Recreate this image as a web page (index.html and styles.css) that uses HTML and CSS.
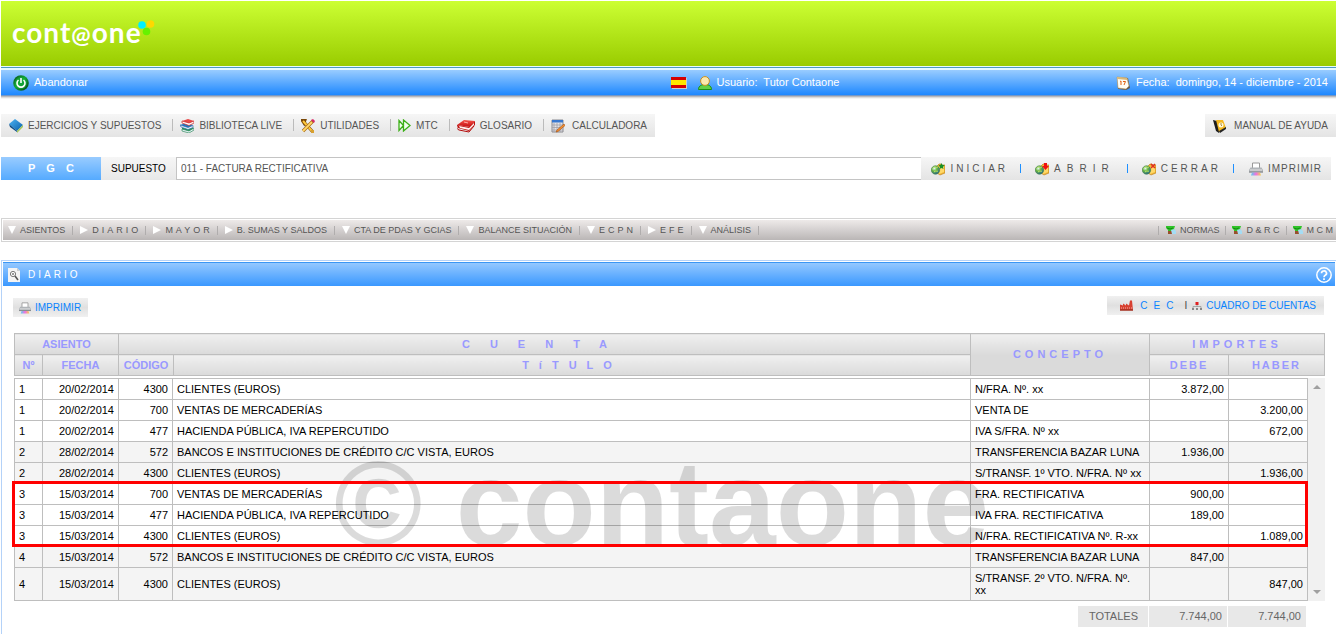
FILE: index.html
```html
<!DOCTYPE html>
<html lang="es">
<head>
<meta charset="utf-8">
<title>Contaone - Diario</title>
<link rel="stylesheet" href="styles.css">
</head>
<body>
<svg class="defs" aria-hidden="true">
  <defs>
    <linearGradient id="gBlue" x1="0" y1="0" x2="1" y2="1"><stop offset="0" stop-color="#4db4f4"/><stop offset="1" stop-color="#0a5fa8"/></linearGradient>
    <linearGradient id="gRed" x1="0" y1="0" x2="0" y2="1"><stop offset="0" stop-color="#f5544c"/><stop offset="1" stop-color="#c40d0d"/></linearGradient>
    <linearGradient id="gPower" x1="0" y1="0" x2="1" y2="1"><stop offset="0" stop-color="#0a4a1a"/><stop offset=".45" stop-color="#12a838"/><stop offset="1" stop-color="#05380f"/></linearGradient>
    <linearGradient id="gInk"><stop offset="0" stop-color="#58d0f0"/><stop offset=".5" stop-color="#f070e0"/><stop offset="1" stop-color="#f8d048"/></linearGradient>
    <radialGradient id="gGlobe" cx=".35" cy=".3" r=".8"><stop offset="0" stop-color="#e8f8ff"/><stop offset=".4" stop-color="#6cb83c"/><stop offset="1" stop-color="#1c5aa0"/></radialGradient>
    <symbol id="printer" viewBox="0 0 14 14">
      <path d="M3.500 6V1h7v5" fill="#fff" stroke="#999"/>
      <path d="M1.500 5.500h11L14 8v2.500H0V8z" fill="#b0b4b8"/>
      <path d="M1 8h12" stroke="#e4e4e4"/>
      <path d="M0 10h14" stroke="#808488"/>
      <path d="M3 10.500h8l1 3H2z" fill="url(#gInk)"/>
    </symbol>
    <symbol id="globe" viewBox="0 0 14 14">
      <path d="M6 4l2-2h2l1 1h3v8l-5 2-3-2z" fill="#f0b838" stroke="#b87a18" stroke-width=".6"/>
      <path d="M8 5l5-1v6l-5 2z" fill="#ffd868"/>
      <circle cx="4.500" cy="8" r="4.200" fill="url(#gGlobe)" stroke="#3a7a3a" stroke-width=".6"/>
      <path d="M2 6c2-2 3 0 5-1M3 10c2-2 3 0 4-1" stroke="#bfe86a" fill="none"/>
    </symbol>
    <symbol id="puzzle" viewBox="0 0 10 10">
      <path d="M0 1h9l-1 3 1 4H2L2 5 0 3z" fill="#30c428"/>
      <path d="M1 3l3 1 3-1" stroke="#148a14" fill="none"/>
      <path d="M2 6h4v3H2z" fill="#98502c"/>
      <path d="M5 5l3-1 2 2v3H6z" fill="#a4dcf4"/>
    </symbol>
  </defs>
</svg>

<header class="brand">
  <h1 class="logo"><span>cont</span><span class="logo-at">@</span><span>one</span></h1>
  <svg class="logo-dots" viewBox="0 0 18 18" aria-hidden="true"><circle cx="5" cy="6" r="3.800" fill="#00f0ff"/><circle cx="13.500" cy="5" r="3.800" fill="#ffd800"/><circle cx="9.500" cy="12.500" r="3.800" fill="#66f200"/></svg>
</header>

<div class="status">
  <div class="status-left"><a href="#" class="status-item">
    <svg class="i16" viewBox="0 0 16 16"><circle cx="8" cy="8" r="7.800" fill="url(#gPower)"/><circle cx="8" cy="8" r="6" fill="#18b040" opacity=".6"/><path d="M5.500 5a4 4 0 1 0 5 0M8 3v5" stroke="#fff" stroke-width="1.600" fill="none"/></svg>
    <span>Abandonar</span></a></div>
  <div class="status-user">
    <svg class="flag" viewBox="0 0 16 12"><path d="M1 1h15v11H1z" fill="#ccc"/><path d="M0 0h15v11H0z" fill="#d40000"/><path d="M0 3h15v5H0z" fill="#ffe600"/></svg>
    <svg class="i14" viewBox="0 0 14 14"><path d="M.5 13.500C.5 9.500 4 8.500 7 8.500s6.500 1 6.500 5z" fill="#62d048" stroke="#1c9018"/><circle cx="7" cy="5" r="4.400" fill="#fbe9b0" stroke="#c89020"/></svg>
    <span>Usuario:&nbsp; Tutor Contaone</span></div>
  <div class="status-date">
    <svg class="i14" viewBox="0 0 14 14"><path d="M1 1l11 1 2 10-4 2-8-1z" fill="#6a5a48"/><path d="M1 1l10 1 2 8-3 3-8-1z" fill="#fffdf4" stroke="#b09868" stroke-width=".6"/><path d="M1 1l10 1 .4 2L1.200 3z" fill="#d8b878"/><path d="M4 5.500l1-.5v4M7 5.500h2.500L8 9" stroke="#e06010" fill="none"/></svg>
    <span>Fecha:&nbsp; domingo, 14 - diciembre - 2014</span></div>
</div>

<div class="tools">
  <nav class="strip" aria-label="Principal">
    <a href="#"><svg class="i14" viewBox="0 0 14 14"><path d="M0 5l6-5 8 6-6 6z" fill="url(#gBlue)"/><path d="M0 5l1 3 7 5v-1z" fill="#0a4880"/><path d="M8 12l6-6v2l-6 6z" fill="#a8c858"/></svg>EJERCICIOS Y SUPUESTOS</a>
    <a href="#"><svg class="i14" viewBox="0 0 14 14"><path d="M2 9l6-2 6 2-5 4-7-2z" fill="#2d9a58"/><path d="M2 10l7 2 5-3v2l-5 3-7-2z" fill="#e4f4f4" stroke="#18784a" stroke-width=".6"/><path d="M0 6l6-2 7 2-5 3z" fill="#2878c0"/><path d="M0 6l8 2.500 5-2v2l-5 2L1 8z" fill="#eaf4fc" stroke="#1c58a0" stroke-width=".6"/><path d="M2 2l6-2 6 2-5 3z" fill="#e84848"/><path d="M2 2l7 2 5-2v2L9 6.500 2 4z" fill="#fff" stroke="#c82020" stroke-width=".7"/></svg>BIBLIOTECA LIVE</a>
    <a href="#"><svg class="i14" viewBox="0 0 14 14"><path d="M2 2l9 10M1 1l3 0-1 3z" stroke="#7a4808" stroke-width="3"/><path d="M2 2l9 10" stroke="#ffc838" stroke-width="2"/><path d="M12 2L2 12" stroke="#a86818" stroke-width="3.200"/><path d="M11 3L2 12" stroke="#ffd868" stroke-width="1.800"/><path d="M10 1l3 3 1-2-2-2z" fill="#d82868"/><path d="M10 11l3 0v3h-3z" fill="#d8a030"/></svg>UTILIDADES</a>
    <a href="#"><svg class="i13" viewBox="0 0 13 13"><path d="M1 1.500v10l4.500-5zM5.500 1v11L12 6.500z" fill="#f4fff0" stroke="#3cb018" stroke-width="1.300"/></svg>MTC</a>
    <a href="#"><svg class="book" viewBox="0 0 18 14"><path d="M0 6l7-5 11 1-5 6z" fill="url(#gRed)"/><path d="M0 6l12 2 6-6v4l-6 6L1 9z" fill="#c01010"/><path d="M2 7l10 2 5-5v2l-5 5-9-2z" fill="#fff4f0"/><path d="M0 6c-1 3 0 4 2 5l10 2 5-6" stroke="#b40c0c" fill="none"/><path d="M7 3l4 1" stroke="#ffb0a8"/></svg>GLOSARIO</a>
    <a href="#" class="calc"><svg class="i14" viewBox="0 0 14 14"><path d="M1 1h11v12H1z" fill="#e4e4e8" stroke="#8a8a90"/><path d="M1 1h11v2.500H1z" fill="#3878d0"/><path d="M3 4v9M6 4v9M9 4v9M1 6h11M1 8.500h11M1 11h11" stroke="#a0a0a8" stroke-width=".8"/><path d="M13 5l-7 6-1 2 2-.5 7-6z" fill="#f8902c" stroke="#a04c10" stroke-width=".6"/></svg>CALCULADORA</a>
  </nav>
  <a href="#" class="strip manual"><svg class="i14" viewBox="0 0 14 14"><path d="M0 1l4 1 3 9-1 3-3-2z" fill="#1c1c1c"/><path d="M3 1l7 0 3 8-7 4z" fill="#f4b820"/><path d="M6 12l7-4v2l-6 4z" fill="#242424"/><circle cx="8" cy="6" r="2.500" fill="#fff8d8"/><path d="M8 4v2l1 1" stroke="#987018" stroke-width=".8" fill="none"/></svg>MANUAL DE AYUDA</a>
</div>

<form class="case">
  <strong class="pgc">P G C</strong>
  <label class="case-label" for="supuesto">SUPUESTO</label>
  <input class="case-input" id="supuesto" type="text" value="011 - FACTURA RECTIFICATIVA">
  <div class="case-actions">
    <button type="button" class="sp3"><svg class="i14" viewBox="0 0 14 14"><use href="#globe"/><path d="M10.500 1l1 2h2l-1.500 2 .5 2-2-1-2 1 .5-2L7.500 3h2z" fill="#189028"/></svg><span>INICIAR</span></button>
    <button type="button" class="sp6"><svg class="i14" viewBox="0 0 14 14"><use href="#globe"/><path d="M9 1h3v3h2l-3.500 4L7 4h2z" fill="#f01010"/></svg><span>ABRIR</span></button>
    <button type="button" class="sp3"><svg class="i14" viewBox="0 0 14 14"><use href="#globe"/><path d="M9 2l4 4M13 2L9 6" stroke="#e03020" stroke-width="1.500"/></svg><span>CERRAR</span></button>
    <button type="button" class="sp1"><svg class="i14"><use href="#printer"/></svg><span>IMPRIMIR</span></button>
  </div>
</form>

<div class="menubar">
  <nav class="menu" aria-label="Informes">
    <a href="#"><i class="down"></i>ASIENTOS</a>
    <a href="#"><i class="right"></i><span class="sp3">DIARIO</span></a>
    <a href="#"><i class="right"></i><span class="sp3">MAYOR</span></a>
    <a href="#"><i class="right"></i>B. SUMAS Y SALDOS</a>
    <a href="#"><i class="down"></i>CTA DE PDAS Y GCIAS</a>
    <a href="#"><i class="down"></i>BALANCE SITUACIÓN</a>
    <a href="#"><i class="down"></i><span class="sp3">ECPN</span></a>
    <a href="#"><i class="right"></i><span class="sp3">EFE</span></a>
    <a href="#"><i class="down"></i>ANÁLISIS</a>
  </nav>
  <nav class="menu menu-right" aria-label="Normativa">
    <a href="#"><svg class="i10"><use href="#puzzle"/></svg>NORMAS</a>
    <a href="#"><svg class="i10"><use href="#puzzle"/></svg>D &amp; R C</a>
    <a href="#"><svg class="i10"><use href="#puzzle"/></svg>M C M</a>
  </nav>
</div>

<main class="panel">
  <div class="panel-title">
    <svg class="doc" viewBox="0 0 12 14"><path d="M0 0h9l3 3v11H0z" fill="#f4f4f4"/><path d="M9 0v3h3" fill="#ccc"/><circle cx="5" cy="6" r="2.600" fill="#fff" stroke="#777"/><circle cx="5" cy="6" r="1" fill="#777"/><path d="M7 8l3 4" stroke="#555" stroke-width="1.500"/></svg>
    <h2>DIARIO</h2>
    <button type="button" class="help" aria-label="Ayuda"><svg class="i16" viewBox="0 0 16 16"><circle cx="8" cy="8" r="7.200" fill="none" stroke="#fff" stroke-width="1.500"/><path d="M5.500 6.300a2.500 2.300 0 1 1 3.700 2Q8 9 8 10.200M8 11.300v1.700" stroke="#fff" stroke-width="1.700" fill="none"/></svg></button>
  </div>

  <div class="actions">
    <button type="button" class="print"><svg class="i12"><use href="#printer"/></svg>IMPRIMIR</button>
    <div class="links">
      <a href="#" class="cec"><svg class="i13" viewBox="0 0 13 10"><path d="M0 10V4l3 1V3l3 2V3l3 2 1-5h2l1 10z" fill="#d84030"/><path d="M1 7.500h11" stroke="#fff" stroke-dasharray="1 1" opacity=".6"/><path d="M0 9.500h13" stroke="#8c2818"/></svg><span>CEC</span></a>
      <b class="bar">I</b>
      <a href="#"><svg class="i10" viewBox="0 0 10 8"><path d="M3.500 0h3v3h-3z" fill="#e02020"/><path d="M5 3v2M1 6V4.500h8V6" stroke="#999" fill="none" stroke-width=".8"/><path d="M0 6h2v2H0zM4 6h2v2H4zM8 6h2v2H8z" fill="#888"/></svg><span>CUADRO DE CUENTAS</span></a>
    </div>
  </div>

  <table class="grid head">
    <colgroup><col class="w-num"><col class="w-date"><col class="w-code"><col><col class="w-concept"><col class="w-debit"><col class="w-credit-head"></colgroup>
    <thead>
      <tr><th colspan="2">ASIENTO</th><th colspan="2" class="sp20">CUENTA</th><th rowspan="2" class="sp4">CONCEPTO</th><th colspan="2" class="sp4">IMPORTES</th></tr>
      <tr><th>Nº</th><th>FECHA</th><th>CÓDIGO</th><th class="sp10">TíTULO</th><th class="sp2">DEBE</th><th class="sp2">HABER</th></tr>
    </thead>
  </table>

  <div class="scroller">
    <table class="grid body" aria-label="Diario">
      <colgroup><col class="w-num"><col class="w-date"><col class="w-code-body"><col><col class="w-concept"><col class="w-debit"><col class="w-credit"></colgroup>
      <tbody>
        <tr><td>1</td><td>20/02/2014</td><td>4300</td><td>CLIENTES (EUROS)</td><td>N/FRA. Nº. xx</td><td>3.872,00</td><td></td></tr>
        <tr><td>1</td><td>20/02/2014</td><td>700</td><td>VENTAS DE MERCADERÍAS</td><td>VENTA DE</td><td></td><td>3.200,00</td></tr>
        <tr><td>1</td><td>20/02/2014</td><td>477</td><td>HACIENDA PÚBLICA, IVA REPERCUTIDO</td><td>IVA S/FRA. Nº xx</td><td></td><td>672,00</td></tr>
        <tr class="alt"><td>2</td><td>28/02/2014</td><td>572</td><td>BANCOS E INSTITUCIONES DE CRÉDITO C/C VISTA, EUROS</td><td>TRANSFERENCIA BAZAR LUNA</td><td>1.936,00</td><td></td></tr>
        <tr class="alt"><td>2</td><td>28/02/2014</td><td>4300</td><td>CLIENTES (EUROS)</td><td>S/TRANSF. 1º VTO. N/FRA. Nº xx</td><td></td><td>1.936,00</td></tr>
        <tr><td>3</td><td>15/03/2014</td><td>700</td><td>VENTAS DE MERCADERÍAS</td><td>FRA. RECTIFICATIVA</td><td>900,00</td><td></td></tr>
        <tr><td>3</td><td>15/03/2014</td><td>477</td><td>HACIENDA PÚBLICA, IVA REPERCUTIDO</td><td>IVA FRA. RECTIFICATIVA</td><td>189,00</td><td></td></tr>
        <tr><td>3</td><td>15/03/2014</td><td>4300</td><td>CLIENTES (EUROS)</td><td>N/FRA. RECTIFICATIVA Nº. R-xx</td><td></td><td>1.089,00</td></tr>
        <tr class="alt"><td>4</td><td>15/03/2014</td><td>572</td><td>BANCOS E INSTITUCIONES DE CRÉDITO C/C VISTA, EUROS</td><td>TRANSFERENCIA BAZAR LUNA</td><td>847,00</td><td></td></tr>
        <tr class="alt tall"><td>4</td><td>15/03/2014</td><td>4300</td><td>CLIENTES (EUROS)</td><td>S/TRANSF. 2º VTO. N/FRA. Nº. xx</td><td></td><td>847,00</td></tr>
      </tbody>
    </table>
    <div class="track" aria-hidden="true"><i class="up"></i><i class="dn"></i></div>
    <div class="watermark" aria-hidden="true">© contaone</div>
    <div class="highlight"></div>
  </div>

  <div class="totals"><span class="t-label">TOTALES</span><span class="t-num">7.744,00</span><span class="t-num">7.744,00</span></div>
</main>
</body>
</html>
```
FILE: styles.css
```css
* { box-sizing: border-box; }

body {
  margin: 0;
  padding: 1px 0 0 1px;
  background: #fff;
  color: #000;
  font: 11px/13px "Liberation Sans", Arial, sans-serif;
  overflow: hidden;
}

a { color: inherit; text-decoration: none; }
svg { display: block; flex: none; }
button { border: 0; padding: 0; background: none; color: inherit; font: inherit; cursor: pointer; }

.defs { position: absolute; width: 0; height: 0; }
.i16 { width: 16px; height: 16px; }
.i14 { width: 14px; height: 14px; }
.i13 { width: 13px; height: 13px; }
.i12 { width: 12px; height: 12px; }
.i10 { width: 10px; height: 10px; }

.sp1 { letter-spacing: 1px; }
.sp2 { letter-spacing: 2px; }
.sp3 { letter-spacing: 3px; }
.sp4 { letter-spacing: 4px; }
.sp6 { letter-spacing: 6px; }
.sp10 { letter-spacing: 10px; }
.sp20 { letter-spacing: 20px; }

/* Brand header */
.brand {
  display: flex;
  align-items: flex-start;
  height: 65px;
  padding: 15px 0 0 11px;
  background: linear-gradient(#ccff33, #99cc00);
}
.logo {
  display: flex;
  align-items: baseline;
  margin: 0;
  color: #fff;
  font: 700 28px/32px Lato, sans-serif;
  letter-spacing: 1px;
}
.logo-at { font-size: 23px; }
.logo-dots { width: 18px; height: 18px; margin-left: -5px; margin-top: 3px; }

/* Status bar */
.status {
  display: flex;
  align-items: center;
  height: 25px;
  margin-top: 4px;
  padding-right: 8px;
  background: linear-gradient(#99ccff, #1e88ff);
  box-shadow: 0 -2px #e6fbff, 0 -3px #4c9ac4, 0 -4px #e6fbff, 0 1px #7398c8, 0 2px #b8b8bc, 0 3px #dcdcdc, 0 4px #f4f4f4;
  color: #fff;
}
.status-left { flex: 0 0 50%; padding-left: 12px; }
.status-item, .status-user, .status-date { display: flex; align-items: center; gap: 5px; }
.status-item { width: max-content; }
.status-user { padding-left: 6px; }
.status-date { margin-left: auto; gap: 6px; }
.flag { width: 16px; height: 12px; margin-right: 6px; }

/* Tool strips */
.tools { display: flex; justify-content: space-between; margin-top: 19px; }
.strip {
  display: flex;
  align-items: center;
  height: 23px;
  background: linear-gradient(#f6f6f6, #e4e4e4);
  color: #555;
  font-size: 10px;
}
.strip > a { display: flex; align-items: center; gap: 5px; padding: 0 11px 0 8px; }
.strip > a + a { position: relative; }
.strip > a + a::before { content: ""; position: absolute; left: 0; top: 0; width: 1px; height: 12px; background: #bbb; }
.strip .calc { gap: 7px; padding-right: 8px; }
.book { width: 18px; height: 14px; }
.manual { gap: 7px; padding: 0 8px; }

/* Case selector */
.case { display: flex; height: 23px; margin: 20px 5px 0 0; color: #555; font-size: 10px; }
.pgc {
  width: 100px;
  background: linear-gradient(#99ccff, #55aaff);
  color: #fff;
  font-size: 11px;
  line-height: 23px;
  text-align: center;
  word-spacing: 8px;
}
.case-label {
  width: 75px;
  padding-left: 10px;
  background: linear-gradient(#f6f6f6, #e8e8e8);
  color: #000;
  line-height: 23px;
}
.case-input {
  flex: 1;
  min-width: 0;
  border: 1px solid #c4c4c4;
  border-right: 0;
  padding: 0 4px;
  color: #555;
  font: inherit;
}
.case-actions { display: flex; align-items: center; padding: 0 9px; background: linear-gradient(#f6f6f6, #e4e4e4); }
.case-actions button { display: flex; align-items: center; gap: 5px; padding: 0 12px 0 1px; line-height: 12px; }
.case-actions button + button { padding-left: 15px; background: linear-gradient(#1e90ff, #1e90ff) 0 50% / 1px 9px no-repeat; }
.case-actions button:last-child { padding-left: 16px; padding-right: 0; }

/* Menu bar */
.menubar {
  display: flex;
  justify-content: space-between;
  align-items: center;
  height: 24px;
  margin-top: 38px;
  border: 1px solid #d4d4d4;
  border-right: 0;
  padding: 1px 0 1px 1px;
  background: linear-gradient(#eeeae9, #bab6b6) content-box;
  color: #555;
  font-size: 9px;
}
.menu { display: flex; align-items: center; height: 20px; }
.menu a { display: flex; align-items: center; gap: 4px; height: 9px; border-right: 1px solid #b0adad; padding: 0 7px; }
.menu a:first-child { padding-left: 5px; }
.menu .sp3 { margin-right: -3px; }
.menu-right a { border-right: 0; border-left: 1px solid #b0adad; padding: 0 6px; }
.menu-right a:last-child { padding-right: 3px; }
.menu-right a:first-child { padding-left: 7px; }
.down { border: 4px solid transparent; border-top: 8px solid #fff; border-bottom: 0; }
.right { border: 4px solid transparent; border-left: 8px solid #fff; border-right: 0; }

/* Panel */
.panel { margin-top: 18px; border: 1px solid #b4d2f8; border-width: 1px 0 0 1px; padding: 1px 1px 8px 1px; }
.panel-title {
  display: flex;
  align-items: center;
  height: 24px;
  border-top: 1px solid #3a96f4;
  padding: 0 3px 0 5px;
  background: linear-gradient(#94c8ff, #3a98ff);
  color: #fff;
}
.panel-title h2 { margin: 0 0 0 8px; font-size: 10px; font-weight: 400; letter-spacing: 3px; }
.doc { width: 12px; height: 14px; }
.help { margin-left: auto; }

.actions { display: flex; justify-content: space-between; align-items: flex-start; padding: 10px 11px 0 10px; color: #0a84ff; font-size: 10px; }
.print { display: flex; align-items: center; gap: 4px; height: 19px; margin-top: 2px; padding: 0 7px 0 6px; background: linear-gradient(#f0f0f0, #e0e0e0, #f0f0f0); }
.links { display: flex; align-items: center; height: 19px; padding: 0 8px 0 13px; background: linear-gradient(#f0f0f0, #e0e0e0, #f0f0f0); }
.links a { display: flex; align-items: center; gap: 4px; }
.links .cec { gap: 7px; letter-spacing: 6px; }
.bar { margin: 0 5px; color: #444; font-weight: 400; }

/* Journal table */
.grid { width: 100%; border-collapse: collapse; table-layout: fixed; }
.w-num { width: 28px; }
.w-date { width: 76px; }
.w-code { width: 55px; }
.w-code-body { width: 54px; }
.w-concept { width: 179px; }
.w-debit { width: 79px; }
.w-credit { width: 79px; }
.w-credit-head { width: 96px; }
.grid th, .grid td { border: 1px solid #bebebe; }

.head { width: calc(100% - 21px); margin: 16px 10px 0 11px; }
.head th { height: 21px; padding: 0; background: linear-gradient(#f0f0f0, #dadada); color: #99f; font-weight: 700; }
.head th[rowspan] { background: linear-gradient(#f0f0f0, #dadada 50%); }

.scroller { position: relative; display: flex; margin: 2px 10px 0 11px; }
.body { flex: 1; min-width: 0; }
.body td { height: 21px; padding: 0 4px; line-height: 12px; }
.body .alt { background: #f4f4f4; }
.body .tall td { height: 33px; }
.body td:nth-child(2), .body td:nth-child(3), .body td:nth-child(6), .body td:nth-child(7) { text-align: right; }
.body td:nth-child(5) { padding-right: 7px; }

.track { display: flex; flex-direction: column; justify-content: space-between; align-items: center; width: 17px; padding: 7px 0; background: #f1f1f1; }
.up { border: 4px solid transparent; border-top: 0; border-bottom-color: #a0a0a0; }
.dn { border: 4px solid transparent; border-bottom: 0; border-top-color: #a0a0a0; }

/* Overlays on the journal */
.watermark {
  position: absolute;
  left: 320px;
  top: 57px;
  color: rgba(0, 0, 0, .14);
  font-size: 120px;
  font-weight: 700;
  line-height: 136px;
  white-space: nowrap;
  pointer-events: none;
}
.highlight { position: absolute; left: -2px; right: 17px; top: 103px; height: 66px; border: 3px solid #f00; pointer-events: none; }

.totals { display: flex; justify-content: flex-end; gap: 1px; margin: 5px 29px 0 0; color: #666; line-height: 21px; text-align: right; }
.totals span { background: #e8e8e8; }
.t-label { width: 70px; padding-right: 10px; }
.t-num { width: 78px; padding-right: 5px; }
```
